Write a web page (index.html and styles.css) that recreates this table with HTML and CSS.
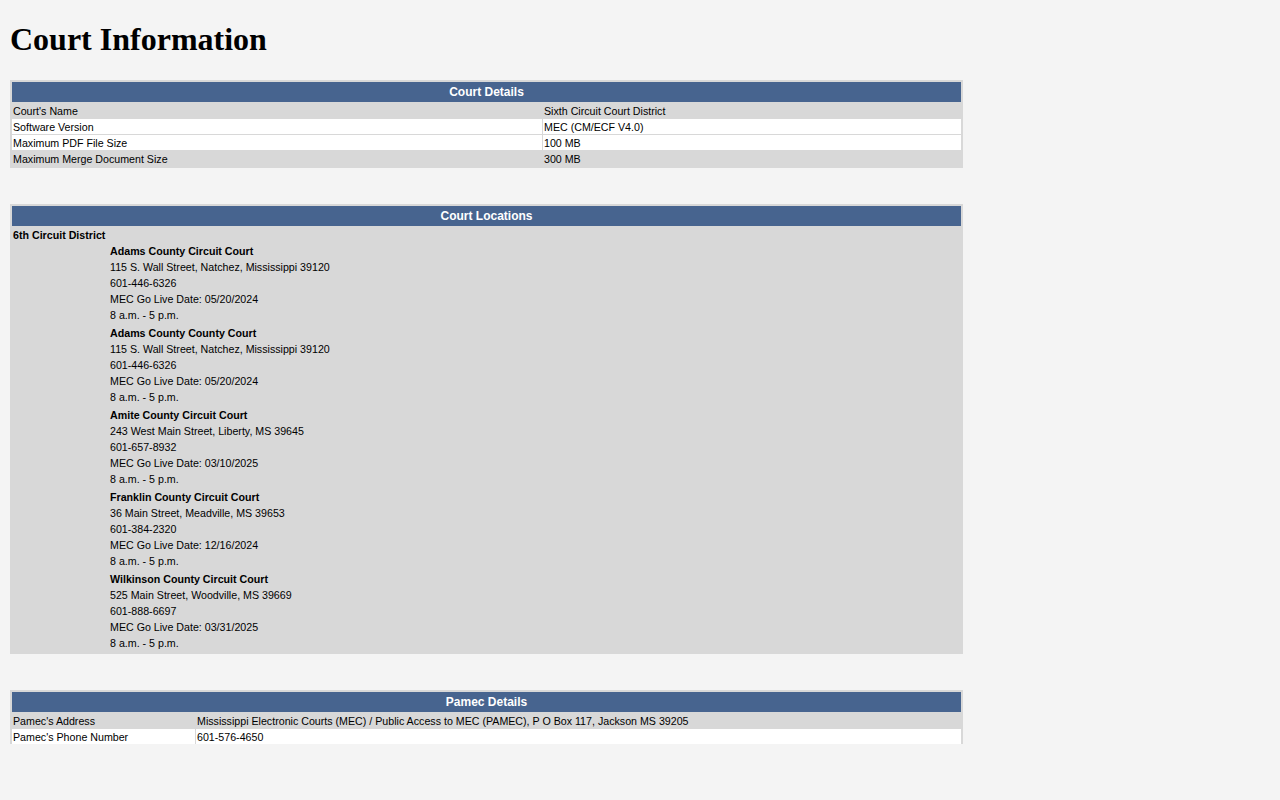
FILE: index.html
```html
<!DOCTYPE html>
<html>
<head>
<meta charset="utf-8">
<title>Court Information</title>
<link rel="stylesheet" href="styles.css">
</head>
<body>
<h1 class="title">Court Information</h1>
<div class="content">
  <table class="info">
    <colgroup><col class="c-wide"><col></colgroup>
    <tr><th colspan="2" class="head">Court Details</th></tr>
    <tr class="odd"><td>Court's Name</td><td>Sixth Circuit Court District</td></tr>
    <tr class="even"><td>Software Version</td><td>MEC (CM/ECF V4.0)</td></tr>
    <tr class="even"><td>Maximum PDF File Size</td><td>100 MB</td></tr>
    <tr class="odd"><td>Maximum Merge Document Size</td><td>300 MB</td></tr>
  </table>

  <table class="info">
    <colgroup><col class="c-indent"><col></colgroup>
    <tr><th colspan="2" class="head">Court Locations</th></tr>
    <tr class="odd"><td colspan="2" class="district">6th Circuit District</td></tr>
    <tr class="odd">
      <td></td>
      <td class="courts">
        <div class="court">
          <div class="court-name">Adams County Circuit Court</div>
          <div>115 S. Wall Street, Natchez, Mississippi 39120</div>
          <div>601-446-6326</div>
          <div>MEC Go Live Date: 05/20/2024</div>
          <div>8 a.m. - 5 p.m.</div>
        </div>
        <div class="court">
          <div class="court-name">Adams County County Court</div>
          <div>115 S. Wall Street, Natchez, Mississippi 39120</div>
          <div>601-446-6326</div>
          <div>MEC Go Live Date: 05/20/2024</div>
          <div>8 a.m. - 5 p.m.</div>
        </div>
        <div class="court">
          <div class="court-name">Amite County Circuit Court</div>
          <div>243 West Main Street, Liberty, MS 39645</div>
          <div>601-657-8932</div>
          <div>MEC Go Live Date: 03/10/2025</div>
          <div>8 a.m. - 5 p.m.</div>
        </div>
        <div class="court">
          <div class="court-name">Franklin County Circuit Court</div>
          <div>36 Main Street, Meadville, MS 39653</div>
          <div>601-384-2320</div>
          <div>MEC Go Live Date: 12/16/2024</div>
          <div>8 a.m. - 5 p.m.</div>
        </div>
        <div class="court">
          <div class="court-name">Wilkinson County Circuit Court</div>
          <div>525 Main Street, Woodville, MS 39669</div>
          <div>601-888-6697</div>
          <div>MEC Go Live Date: 03/31/2025</div>
          <div>8 a.m. - 5 p.m.</div>
        </div>
      </td>
    </tr>
  </table>

  <table class="info">
    <colgroup><col class="c-mid"><col></colgroup>
    <tr><th colspan="2" class="head">Pamec Details</th></tr>
    <tr class="odd"><td>Pamec's Address</td><td>Mississippi Electronic Courts (MEC) / Public Access to MEC (PAMEC), P O Box 117, Jackson MS 39205</td></tr>
    <tr class="even"><td>Pamec's Phone Number</td><td>601-576-4650</td></tr>
  </table>
</div>
</body>
</html>
```

FILE: styles.css
```css
html, body {
  background: #f4f4f4;
}
body {
  margin: 0 10px;
  font-family: "Liberation Sans", Arial, sans-serif;
  color: #000;
}
.title {
  font-family: "Liberation Serif", "Times New Roman", serif;
  font-size: 32px;
  font-weight: bold;
  margin: 21.44px 0;
  line-height: normal;
}
.content {
  height: 664px;
  overflow: hidden;
}
.info {
  width: 953px;
  background: #d8d8d8;
  border: 1px solid #d8d8d8;
  border-spacing: 1px;
  margin-bottom: 36px;
  font-size: 10.67px;
  table-layout: fixed;
}
.c-wide { width: 530px; }
.c-indent { width: 96px; }
.c-mid { width: 183px; }
.head {
  background: #47648f;
  color: #fff;
  font-size: 12px;
  font-weight: bold;
  text-align: center;
  height: 20px;
  padding: 0 1px;
  line-height: 14px;
}
.info td {
  padding: 2px 1px 0;
  line-height: 13px;
  height: 13px;
  text-align: left;
  vertical-align: top;
}
.odd td { background: #d8d8d8; }
.even td { background: #fff; }
.district { font-weight: bold; }
.info td.courts {
  padding: 0 1px 1px;
}
.court {
  margin-bottom: 2px;
}
.court:last-child { margin-bottom: 0; }
.court div {
  line-height: 16px;
}
.court .court-name {
  font-weight: bold;
}
```
